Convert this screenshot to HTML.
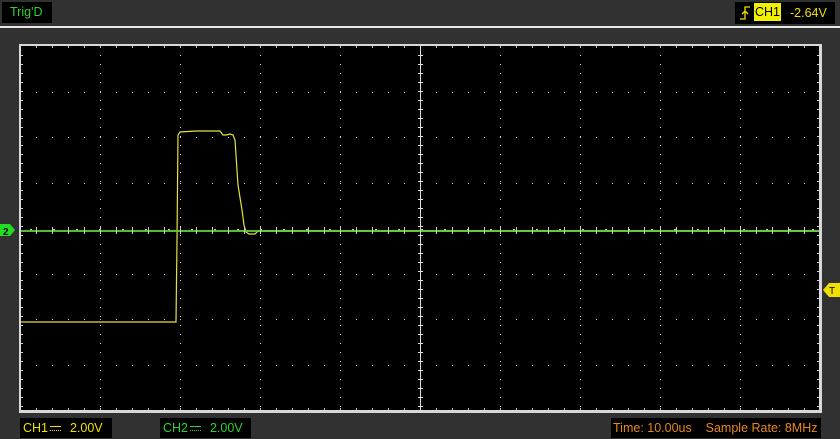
<!DOCTYPE html>
<html><head><style>
body{margin:0;width:840px;height:439px;background:#313131;overflow:hidden;position:relative;font-family:"Liberation Sans",sans-serif;}
.box{position:absolute;background:#000;font-size:12.5px;line-height:20px;white-space:pre;}
.dc{display:inline-block;width:11px;height:8px;position:relative;vertical-align:middle;margin:0 2px}
.dc:before{content:"";position:absolute;left:0;right:0;top:1px;border-top:1px solid currentColor}
.dc:after{content:"";position:absolute;left:0;right:0;top:5px;border-top:1px dotted currentColor}
</style></head><body>
<div class="box" style="left:2px;top:2px;width:50px;height:21px;color:#2fd02f;padding-left:8px;box-sizing:border-box;">Trig'D</div>
<div style="position:absolute;left:0;top:26px;width:840px;height:2px;background:#e8e8e8"></div>
<div class="box" style="left:735px;top:2px;width:100px;height:22px;color:#f0e000;">
<svg style="position:absolute;left:4px;top:3px" width="12" height="16"><path d="M1 14H6V2H11M3 9L6 6L9 9" stroke="#f0e000" fill="none" stroke-width="1.3"/></svg>
<span style="position:absolute;left:19px;top:1px;background:#f0f000;color:#000;padding:0 1px;line-height:18px">CH1</span><span style="position:absolute;left:55px;top:1px">-2.64V</span></div>
<svg id="s" style="position:absolute;left:0;top:0" width="840" height="439"></svg>
<div class="box" style="left:20px;top:418px;width:92px;height:20px;color:#f0e000;padding-left:3px;box-sizing:border-box">CH1<span class="dc"></span>  2.00V</div>
<div class="box" style="left:160px;top:418px;width:91px;height:20px;color:#2fd02f;padding-left:3px;box-sizing:border-box">CH2<span class="dc"></span>  2.00V</div>
<div class="box" style="left:611px;top:418px;width:210px;height:20px;color:#e8881c;padding-left:2px;box-sizing:border-box">Time: 10.00us    Sample Rate: 8MHz</div>
<script>
var s='';
s+='<rect x="19" y="44" width="803" height="369" fill="#d8d8d8"/><rect x="21" y="46" width="798" height="364" fill="#000"/>';
var c='#cfcfcf';
for(var k=1;k<10;k++){var x=20+80*k;if(k==5)continue;for(var y=55;y<410;y+=9)s+='<rect x="'+x+'" y="'+y+'" width="1" height="1" fill="'+c+'"/>';}
for(var r=1;r<8;r++){var y=Math.round(46+45.5*r);if(r==4)continue;for(var x=36;x<819;x+=16)s+='<rect x="'+x+'" y="'+y+'" width="1" height="1" fill="'+c+'"/>';}
for(var x=36;x<819;x+=16){s+='<rect x="'+x+'" y="46" width="1" height="2" fill="'+c+'"/><rect x="'+x+'" y="408" width="1" height="2" fill="'+c+'"/>';}
for(var y=55;y<410;y+=9){s+='<rect x="21" y="'+y+'" width="2" height="1" fill="'+c+'"/><rect x="817" y="'+y+'" width="2" height="1" fill="'+c+'"/><rect x="418" y="'+y+'" width="5" height="1" fill="#ddd"/>';}
s+='<rect x="420" y="46" width="1" height="364" fill="#e0e0e0"/>';
s+='<polyline points="21,322 176,322 177,240 178,135 180,132 196,131 220,131 223,135 226,135 230,134 233,135 235,140 238,185 242,210 244,225 246,232 249,234 255,234 258,231 270,231 819,231" fill="none" stroke="#e8e040" stroke-width="1.2"/>';
s+='<rect x="21" y="230" width="798" height="2" fill="#66cc33" opacity="0.9"/>';
for(var x=36;x<819;x+=16)s+='<rect x="'+x+'" y="227" width="1" height="7" fill="#ccc"/>';
for(var x=30;x<819;x+=23)s+='<rect x="'+x+'" y="229" width="2" height="1" fill="#8f8"/>';
s+='<path d="M0 224H10L15 230L10 236H0Z" fill="#22dd22"/><text x="3" y="235" font-size="10" font-weight="bold" fill="#000" font-family="Liberation Sans">2</text>';
s+='<path d="M840 283H829L823 290L829 297H840Z" fill="#f0e000"/><text x="829" y="294" font-size="10" fill="#000" font-family="Liberation Sans">T</text>';
document.getElementById('s').innerHTML=s;
</script>
</body></html>
